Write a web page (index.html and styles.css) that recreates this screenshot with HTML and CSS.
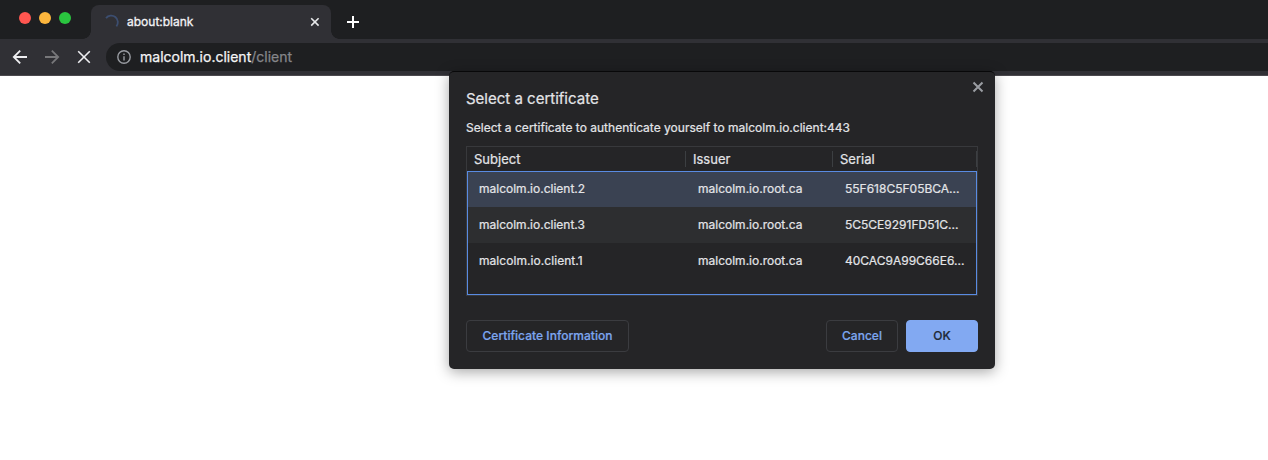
FILE: index.html
```html
<!DOCTYPE html>
<html lang="en">
<head>
<meta charset="utf-8">
<title>Select a certificate</title>
<link rel="stylesheet" href="styles.css">
</head>
<body>
<div class="window">
  <header class="tabstrip">
    <div class="lights"><i class="red"></i><i class="amber"></i><i class="green"></i></div>
    <div class="tab">
      <svg class="spinner" width="16" height="16" viewBox="0 0 16 16"><path d="M2 4.1A6.6 6.6 0 0 1 12.4 12.4" /></svg>
      <span class="tab-title">about:blank</span>
      <svg class="tab-close" width="10" height="10" viewBox="0 0 10 10"><path d="M1.2 1.2l7.4 7.4M8.6 1.2L1.2 8.6"/></svg>
    </div>
    <svg class="new-tab" width="12" height="12" viewBox="0 0 12 12"><path d="M6 0v12M0 6h12"/></svg>
  </header>
  <div class="toolbar">
    <svg class="nav" width="16" height="16" viewBox="0 0 16 16"><path d="M15 8H2M8.2 1.6L1.8 8l6.4 6.4"/></svg>
    <svg class="nav dim" width="16" height="16" viewBox="0 0 16 16"><path d="M1 8h13M7.8 1.6L14.2 8l-6.4 6.4"/></svg>
    <svg class="nav stop" width="16" height="16" viewBox="0 0 16 16"><path d="M2.2 2.2l11.6 11.6M13.8 2.2L2.2 13.8"/></svg>
    <div class="omnibox">
      <svg class="info" width="14" height="14" viewBox="0 0 14 14"><circle cx="7" cy="7" r="6.2"/><path d="M7 6.2v4.2M7 3.5v1.5"/></svg>
      <span class="host">malcolm.io.client</span><span class="path">/client</span>
    </div>
  </div>
  <main class="page"></main>

  <section class="dialog">
    <svg class="dialog-close" width="12" height="12" viewBox="0 0 12 12"><path d="M1.5 1.5l9 9M10.5 1.5l-9 9"/></svg>
    <h1>Select a certificate</h1>
    <p>Select a certificate to authenticate yourself to malcolm.io.client:443</p>
    <div class="table">
      <div class="row head"><span class="cell">Subject</span><span class="cell">Issuer</span><span class="cell">Serial</span></div>
      <div class="list">
        <div class="row selected"><span class="cell">malcolm.io.client.2</span><span class="cell">malcolm.io.root.ca</span><span class="cell">55F618C5F05BCA...</span></div>
        <div class="row odd"><span class="cell">malcolm.io.client.3</span><span class="cell">malcolm.io.root.ca</span><span class="cell">5C5CE9291FD51C...</span></div>
        <div class="row"><span class="cell last-subject">malcolm.io.client.1</span><span class="cell">malcolm.io.root.ca</span><span class="cell">40CAC9A99C66E6...</span></div>
      </div>
    </div>
    <footer class="actions">
      <button class="button info-button">Certificate Information</button>
      <button class="button cancel">Cancel</button>
      <button class="button ok">OK</button>
    </footer>
  </section>
</div>
</body>
</html>
```
FILE: styles.css
```css
* { box-sizing: border-box; }
body { margin: 0; background: #fff; font-family: Inter, "Liberation Sans", sans-serif; }
svg { display: block; fill: none; flex: none; }
.window { position: relative; width: 100%; height: 460px; overflow: hidden; display: flex; flex-direction: column; background: #fff; }
.tabstrip { height: 39px; flex: none; display: flex; background: #1e1f21; }
.lights { display: flex; gap: 8px; padding: 12px 0 0 19px; width: 91px; }
.lights i { width: 12px; height: 12px; border-radius: 50%; }
.red { background: #ff5650; }
.amber { background: #fdb63d; }
.green { background: #2ac53f; }
.tab { position: relative; width: 240px; height: 34px; margin-top: 5px; padding: 0 11px 0 13px; display: flex; align-items: center; background: #303035; border-radius: 8px 8px 0 0; }
.tab::before, .tab::after { content: ""; position: absolute; bottom: 0; width: 8px; height: 8px; }
.tab::before { left: -8px; background: radial-gradient(circle at 0 0, transparent 7.5px, #303035 8px); }
.tab::after { right: -8px; background: radial-gradient(circle at 100% 0, transparent 7.5px, #303035 8px); }
.spinner { stroke: #3c4e70; stroke-width: 1.8; }
.tab-title { margin-left: 7px; font-size: 12px; line-height: 16px; color: #f3f3f5; -webkit-text-stroke: .3px; }
.tab-close { margin-left: auto; stroke: #e7e8ea; stroke-width: 1.6; }
.new-tab { margin: 16px 0 0 16px; stroke: #fff; stroke-width: 2; }
.toolbar { height: 37px; flex: none; display: flex; gap: 16px; padding: 4px 0 0 12px; background: #303035; border-bottom: 1px solid #4b494e; }
.nav { margin-top: 6px; stroke: #eeeef1; stroke-width: 1.8; }
.dim { stroke: #77777a; }
.stop { stroke-width: 1.6; }
.omnibox { flex: 1; height: 28px; margin-left: -2px; padding-left: 11px; display: flex; align-items: center; background: #1e1f21; border-radius: 14px 0 0 14px; font-size: 14px; }
.info { stroke: #999ca2; stroke-width: 1.4; margin-right: 9px; }
.host, .path { line-height: 18px; -webkit-text-stroke: .25px; }
.host { color: #f5f5f6; }
.path { color: #85868a; }
.page { flex: 1; }
.dialog { position: absolute; left: 449px; top: 71px; width: 546px; height: 298px; padding: 18px 17px 0; background: #252527; border-top: 1px solid #080809; border-radius: 5px; box-shadow: 0 3px 14px rgba(0,0,0,.35); color: #e3e4e7; -webkit-text-stroke: .22px; }
.dialog-close { position: absolute; right: 11px; top: 9px; stroke: #9a9da2; stroke-width: 2; }
.dialog h1 { margin: 0; font-size: 15px; line-height: 18px; font-weight: 400; }
.dialog p { margin: 12px 0 0; font-size: 12px; line-height: 16px; letter-spacing: .015px; white-space: nowrap; }
.table { margin-top: 10px; height: 150px; border: 1px solid #38393c; }
.row { display: grid; grid-template-columns: 219px 147px 1fr; align-items: center; }
.head { height: 24px; font-size: 13px; }
.head .cell { height: 16px; line-height: 16px; padding-left: 7px; border-right: 1px solid #3c3f42; }
.list { height: 124px; border: 1px solid #598be2; font-size: 12px; }
.list .row { height: 36px; padding-left: 11px; white-space: nowrap; line-height: 16px; }
.list .selected { height: 35px; padding-bottom: 1px; background: #3a4252; }
.list .odd { background: #2d2e30; }
.last-subject { letter-spacing: .06px; }
.actions { display: flex; margin-top: 24px; }
.button { height: 32px; padding: 0; border: 1px solid #3b3c40; border-radius: 4px; background: transparent; color: #7da6ef; font: 500 12px/16px Inter, "Liberation Sans", sans-serif; letter-spacing: .03px; -webkit-text-stroke: .22px; }
.info-button { width: 163px; }
.cancel { width: 72px; margin-left: auto; margin-right: 8px; }
.ok { width: 72px; color: #202938; background: #82a9f2; border-color: #82a9f2; }
```
